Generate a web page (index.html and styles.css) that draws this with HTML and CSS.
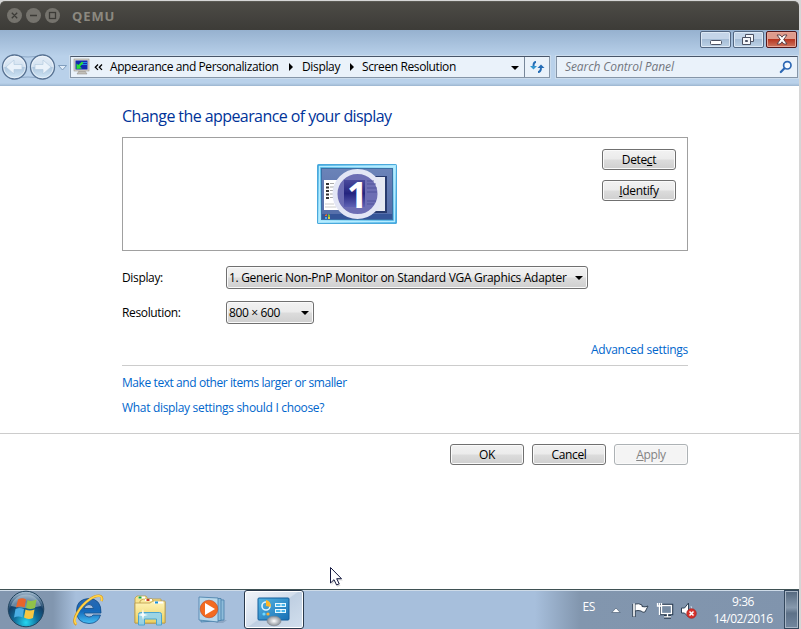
FILE: index.html
```html
<!DOCTYPE html>
<html lang="en">
<head>
<meta charset="utf-8">
<title>QEMU</title>
<link rel="stylesheet" href="styles.css">
</head>
<body>
<div class="vm">
  <div class="host-bar">
    <svg width="60" height="30" viewBox="0 0 60 30"><g fill="#75736d"><circle cx="14.500" cy="15.500" r="7.500"/><circle cx="33.500" cy="15.500" r="7.500"/><circle cx="52.500" cy="15.500" r="7.500"/></g><g fill="none" stroke="#3c3b37" stroke-width="1.300"><path d="M11.800 12.800l5.400 5.400m0-5.400l-5.400 5.400M30 15.500h7"/><rect x="49.500" y="12.500" width="6" height="6"/></g></svg>
    <span class="host-title">QEMU</span>
  </div>
  <header class="glass">
    <div class="caption-row">
      <div class="cap"><svg width="29" height="16"><rect x="9.500" y="8.500" width="11" height="4" rx="1" fill="#fff" stroke="#4c5263"/></svg></div>
      <div class="cap"><svg width="29" height="16"><g fill="#f5f7fa" stroke="#4c5263"><path fill-rule="evenodd" d="M11.500 2.500h8v7h-8zM14.500 5.500h2v1h-2z"/><path fill-rule="evenodd" d="M8.500 5.500h8v7h-8zM11.500 8.500h2v1h-2z"/></g></svg></div>
      <div class="cap close"><svg width="29" height="16"><path d="M10 3h3.200l1.800 2.200L16.800 3H20l-3.300 4.500L20 12h-3.200L15 9.800 13.200 12H10l3.300-4.500z" fill="#fff" stroke="#5d4248"/></svg></div>
    </div>
    <div class="nav-row">
      <svg class="nav-arrows" width="70" height="30" viewBox="0 0 70 30">
        <defs><linearGradient id="orb" x2="0" y2="1"><stop stop-color="#e7eff8"/><stop offset=".48" stop-color="#d2e1f0"/><stop offset=".52" stop-color="#aec7df"/><stop offset="1" stop-color="#d3e8f7"/></linearGradient></defs>
        <path d="M12 3Q28 7 44 3M12 27Q28 23 44 27" stroke="#8da8c6" fill="none"/>
        <g fill="url(#orb)" stroke="#587292" stroke-width="1.300"><circle cx="14.500" cy="15" r="12"/><circle cx="42.500" cy="15" r="12"/></g>
        <g fill="none" stroke="#f4f8fc" stroke-opacity=".65"><circle cx="14.500" cy="15" r="10.800"/><circle cx="42.500" cy="15" r="10.800"/></g>
        <g fill="#eaf2fa" stroke="#b5cbe0" stroke-width=".7"><path d="M6 15l8-7v4.500h8v5h-8V22z"/><path d="M51 15l-8-7v4.500h-8v5h8V22z"/></g>
        <path d="M58.500 13.500h8L62.500 18z" fill="#e0ecf8" stroke="#7896b8" stroke-width=".9"/>
      </svg>
      <div class="address">
        <svg class="addr-icon" width="18" height="18" viewBox="0 0 18 18"><path d="M6 13h6l2 3H4z" fill="#c2c0b9" stroke="#8e8b84" stroke-width=".5"/><rect x="1" y="1" width="15" height="12" fill="#d7d4cc" stroke="#99958c" stroke-width=".6"/><rect x="2.500" y="2.500" width="12" height="9" fill="#1228b0"/><path d="M8 4.500h6M9 6.500h5" stroke="#258ae8"/><path d="M3.500 11V5.500L5.300 7 9 3.500 10.500 5 7 8.500 9 10.500z" fill="#29df37"/></svg>
        <svg class="chev" width="9" height="9" viewBox="0 0 9 9"><path d="M4 1.500L1.300 4.200 4 6.900M8 1.500L5.300 4.200 8 6.900" fill="none" stroke="#000" stroke-width="1.300"/></svg>
        <span class="crumb c1">Appearance and Personalization</span>
        <i class="tri t1"></i>
        <span class="crumb c2">Display</span>
        <i class="tri t2"></i>
        <span class="crumb c3">Screen Resolution</span>
        <i class="down addr-down"></i>
        <div class="refresh"><svg width="16" height="16" viewBox="0 0 16 16"><path d="M7 3Q4.500 3 4.500 7M9 13q3 0 3-5" fill="none" stroke="#246cb5" stroke-width="2"/><path d="M1 7h7L4.500 10.500z" fill="#3395cf"/><path d="M8.500 9h7L12 5.500z" fill="#246cb5"/></svg></div>
      </div>
      <div class="search"><span class="search-text">Search Control Panel</span><svg width="14" height="14" viewBox="0 0 14 14"><circle cx="8.300" cy="5.300" r="3.700" fill="#f7fbff" stroke="#2d68b4" stroke-width="1.700"/><path d="M5.500 8.200L1.800 12" stroke="#2d68b4" stroke-width="2.200" stroke-linecap="round"/></svg></div>
    </div>
  </header>
  <main class="page">
    <div class="settings">
      <h1><span class="heading">Change the appearance of your display</span></h1>
      <section class="preview">
        <svg class="monitor" width="80" height="60" viewBox="0 0 80 60">
          <defs><linearGradient id="frame" x2="1" y2="1"><stop stop-color="#36a3dc"/><stop offset=".5" stop-color="#a5e4fb"/><stop offset="1" stop-color="#3aa6e2"/></linearGradient><linearGradient id="desk" x2="0" y2="1"><stop stop-color="#6b83b8"/><stop offset="1" stop-color="#536ca8"/></linearGradient><linearGradient id="disc" x2="0" y2="1"><stop stop-color="#4a4a9c"/><stop offset=".5" stop-color="#24257f"/><stop offset="1" stop-color="#5e62b4"/></linearGradient></defs>
          <rect width="80" height="60" rx="1.500" fill="#4aa9dc"/><rect x="1" y="1" width="78" height="58" fill="url(#frame)"/><rect x="2.500" y="2.500" width="75" height="55" fill="none" stroke="#b5ecff" stroke-width="1.500"/>
          <rect x="4.500" y="4.500" width="71" height="51" fill="url(#desk)" stroke="#3a70a5"/>
          <path d="M54 12h16v37H54z" fill="#283b6e"/><rect x="53" y="13" width="15" height="34" fill="#e5e9f2"/>
          <rect x="7" y="16" width="18" height="30" fill="#fff"/><path d="M10.500 19v16" stroke="#333" stroke-width="3" stroke-dasharray="2 1.500"/><path d="M15 19v16" stroke="#aaa" stroke-width="4" stroke-dasharray="1 2.500"/><path d="M8 40h9M8 43h11" stroke="#ccc"/>
          <rect x="5" y="50" width="70" height="5" fill="#355598"/><path d="M8 51l2-1v2H8z" fill="#e96a2c"/><path d="M11 50l2 1v2h-2z" fill="#7dbb3a"/><path d="M8 53h2v2H8z" fill="#4ba7e9"/><path d="M11 53h2v2h-2z" fill="#dfc83c"/>
          <circle cx="40.500" cy="30" r="22.500" fill="#6d6eb4" stroke="#e3e6f5" stroke-width="5"/>
          <rect x="27" y="16" width="21" height="27" fill="url(#disc)"/>
          <path d="M50 17h7M50 20h9M50 24h10M50 28h10M50 37h9M50 40h7" stroke="#4b4d98" opacity=".8"/>
          <text x="40" y="43.500" text-anchor="middle" class="monitor-number">1</text>
        </svg>
        <div class="preview-actions"><button><span>Dete<u>c</u>t</span></button><button><span><u>I</u>dentify</span></button></div>
      </section>
      <div class="field"><label>Display:</label><div class="combo wide"><span class="monitor-name">1. Generic Non-PnP Monitor on Standard VGA Graphics Adapter</span><i class="down"></i></div></div>
      <div class="field second"><label>Resolution:</label><div class="combo small"><span>800 × 600</span><i class="down"></i></div></div>
      <div class="advanced"><a>Advanced settings</a></div>
      <div class="links"><a class="text-size">Make text and other items larger or smaller</a><a class="which">What display settings should I choose?</a></div>
    </div>
    <footer class="actions"><button><span>OK</span></button><button><span>Cancel</span></button><button class="disabled"><span><u>A</u>pply</span></button></footer>
    <svg class="cursor" width="18" height="22" viewBox="0 0 18 22"><path d="M2.500 3v16l3.500-3.500L8.500 21l3-1.500L9 14.500h5z" fill="#888" opacity=".3"/><path d="M1.500 1.500v15.500l3.500-3.300 2.600 5.300 2.600-1.200-2.500-5.100h4.800z" fill="#fff" stroke="#161a40"/></svg>
  </main>
  <div class="taskbar">
    <svg class="start" width="38" height="38" viewBox="0 0 38 38"><defs><radialGradient id="start" cx=".5" cy=".88" r=".85"><stop stop-color="#25d7f1"/><stop offset=".38" stop-color="#116f9c"/><stop offset=".7" stop-color="#143e66"/><stop offset="1" stop-color="#a0b8cc"/></radialGradient></defs><circle cx="19" cy="19" r="17.800" fill="url(#start)" stroke="#21445f"/><path d="M4 16a15.500 15.500 0 0 1 30 0Q19 20 4 16z" fill="#dce9f1" opacity=".42"/><path d="M11 9.500q4-2.500 8 0l-1.500 8q-4-2-8.500 0z" fill="#e8652b"/><path d="M20.500 10q4 2 9-.5l-1.500 8.500q-5 2-9 0z" fill="#91c249"/><path d="M8.500 19q4-2 8.500 0l-1.500 8.500q-4-2-8.500 0z" fill="#4aaee4"/><path d="M18.500 19.500q4 2 9 0L26 28q-5 2-9-.5z" fill="#f7c742"/></svg>
    <svg class="ie" width="34" height="34" viewBox="0 0 34 34"><defs><linearGradient id="ieb" x2="0" y2="1"><stop stop-color="#2b68b0"/><stop offset=".5" stop-color="#1468ba"/><stop offset="1" stop-color="#45c0f5"/></linearGradient></defs><path fill-rule="evenodd" d="M30 20H13q.8 4 5 4 3 0 4-2h7.500Q27 30.500 18 30.500 5.500 30 5.500 18 5.500 6 18 5.500 30.500 6 30 20zM13 15.500h9.500Q22 11.500 18 11.500t-5 4z" fill="url(#ieb)" stroke="#124b88" stroke-width=".8"/><path d="M5.500 31.500C-1 28 9 13 18.500 6.500 26 1 33 1.500 30.500 8" fill="none" stroke="#d29724" stroke-width="2.600"/><path d="M5.500 31C0 28 9 13 18.500 6.500 26 1 32.500 2 30.500 8" fill="none" stroke="#ffd44b" stroke-width="1.700"/></svg>
    <svg class="folder" width="34" height="32" viewBox="0 0 34 32"><defs><linearGradient id="fold" x2="0" y2="1"><stop stop-color="#fff5bb"/><stop offset="1" stop-color="#ecd05f"/></linearGradient></defs><g stroke="#b99b48" stroke-width=".8"><path d="M2 28V3l2-2h9l2 3h13v24z" fill="#f7e48f"/><path d="M7 28V6l3-2h9l2 3h11v21z" fill="#fae99e"/><path d="M2 28V8h15l3-2h12v22z" fill="url(#fold)"/></g><path d="M5 2.500h7M12 5h7M21 7.500h9" stroke="#fff" stroke-width="2"/><path d="M5.500 2.500h3" stroke="#18a83e" stroke-width="2"/><path d="M13.500 5h3" stroke="#cb3a22" stroke-width="2"/><path d="M22 7.500h3" stroke="#1991db" stroke-width="2"/><path d="M5.500 30V19.500q0-2 2-2h19q2 0 2 2V30h-5v-6h-12v6z" fill="#91d3ef" fill-opacity=".9" stroke="#4ba5cf"/><path d="M5 20l3.500-1L10 14l1 5 4 1-4 1-1 4-1-4z" fill="#fff" opacity=".9"/></svg>
    <svg class="media" width="30" height="28" viewBox="0 0 30 28"><path d="M23 24h6l-4 3h-8z" fill="#66829f" opacity=".4"/><g fill="#8ebcda" stroke="#467fa9" stroke-width=".8"><path d="M5 3l21 1v20l-21 1z"/><path d="M3 2l20 .5v22L3 26z"/><path d="M1 1l19 1v24L1 24z" fill="#b8d8eb"/></g><circle cx="11" cy="13" r="8.800" fill="#f36b20" stroke="#bd471e" stroke-width=".6"/><path d="M7 7l10 6-10 6z" fill="#fff"/></svg>
    <div class="active-task"><svg width="34" height="30" viewBox="0 0 34 30"><defs><linearGradient id="panel" x2="1" y2="1"><stop stop-color="#55b4e2"/><stop offset="1" stop-color="#1770b5"/></linearGradient><radialGradient id="ball"><stop stop-color="#fff"/><stop offset="1" stop-color="#8c929a"/></radialGradient></defs><rect x="1" y="1" width="31" height="22" rx="1" fill="url(#panel)" stroke="#145e9c"/><circle cx="9" cy="9" r="4" fill="none" stroke="#dff4ff" stroke-width="1.600"/><path d="M9 9V3a5.500 5.500 0 0 1 4.500 7z" fill="#ffb627"/><g fill="#49b6ec" stroke="#e5f8ff"><rect x="18.500" y="6.500" width="10" height="3"/><rect x="18.500" y="12.500" width="10" height="3"/></g><path d="M24 6v4M24 12v4" stroke="#fff"/><circle cx="7" cy="17" r="1.600" fill="#6ed8ff"/><circle cx="11" cy="17" r="1.600" fill="#ffae32"/><ellipse cx="17" cy="24" rx="7" ry="4.800" fill="url(#ball)" stroke="#858b94" stroke-width=".6"/></svg></div>
    <div class="tray">
      <span class="language">ES</span>
      <svg class="up" width="10" height="8"><path d="M.8 6.500h8.400L5 2z" fill="#fff" stroke="#4f6177" stroke-width=".7"/></svg>
      <svg class="flag" width="18" height="18"><path d="M3 2v13" stroke="#344456" stroke-width="3.500"/><path d="M4 2q4-1 7 1v1.500q3 1 6-.5l-3 6q-2 1-4-1-3-1-6 0z" fill="#fff" stroke="#344456"/><path d="M3 1.500v13" stroke="#fff" stroke-width="1.600"/></svg>
      <svg class="network" width="18" height="18"><path d="M5.500 3.500h10v8h-10zM8 15h7M11.500 12v3" fill="none" stroke="#293c52" stroke-width="3.500"/><rect x="5.500" y="3.500" width="10" height="8" fill="#768ba3" stroke="#fff" stroke-width="1.300"/><path d="M8 14.800h7M11.500 12v3M1.500 1v3h4V1M3.500 1v12" fill="none" stroke="#fff" stroke-width="1.300"/></svg>
      <svg class="sound" width="17" height="18"><path d="M1.500 6h3l4-5v14l-4-4h-3z" fill="#fff" stroke="#304358"/><path d="M11 4q2 3 0 7" stroke="#cbd6e2" fill="none"/><circle cx="11.500" cy="11.500" r="4.800" fill="#d8322c" stroke="#9e1715" stroke-width=".6"/><path d="M9.500 9.500l4 4m0-4l-4 4" stroke="#fff" stroke-width="1.600"/></svg>
      <div class="clock"><span>9:36</span><span>14/02/2016</span></div>
      <div class="show-desktop"></div>
    </div>
  </div>
</div>
</body>
</html>
```

FILE: styles.css
```css
* { box-sizing: border-box; }
body { margin: 0; width: 801px; height: 629px; overflow: hidden; background: #d6d6d6; font: 12px/16px "Open Sans", sans-serif; color: #000; letter-spacing: -.35px; white-space: nowrap; }
svg { display: block; flex: none; }
.vm { width: 799px; height: 629px; display: flex; flex-direction: column; padding-top: 1px; }
.host-bar { height: 29px; flex: none; background: linear-gradient(#4d4b46, #3d3c38 95%); border-top: 1px solid #5c5b55; border-radius: 5px 5px 0 0; display: flex; }
.host-bar svg { margin-top: -2px; }
.host-title { margin: 6px 0 0 12px; color: #8c8980; font: bold 13px/17px "Open Sans", sans-serif; letter-spacing: .9px; }
.glass { height: 56px; flex: none; background: linear-gradient(#96b1cf, #b9d1ea 48%, #b9d1ea 53px, #a7c0da); border-bottom: 1px solid #a1bad4; }
.caption-row { height: 22px; padding-top: 1px; display: flex; justify-content: flex-end; gap: 2px; margin-right: 2px; }
.cap { width: 31px; height: 17px; border: 1px solid #536781; border-radius: 2px; box-shadow: inset 0 0 0 1px #dce8f4; background: linear-gradient(#c4d5e8 45%, #a5bdd6 50%, #bdd2e6); }
.close { border-color: #54181b; background: linear-gradient(#df9b8c 45%, #b83620 50%, #cd765f); box-shadow: inset 0 0 0 1px #e7a697; }
.nav-row { display: flex; height: 30px; }
.address { width: 480px; height: 22px; margin-top: 4px; border: 1px solid #8696a8; border-top-color: #485568; background: #eaf2fa; display: flex; align-items: center; box-shadow: 0 0 0 1px #cbdced; }
.addr-icon { margin-left: 2px; }
.chev { margin: 0 7px 0 3px; }
.crumb { line-height: 18px; }
.c1 { width: 170px; letter-spacing: -.41px; }
.c2 { width: 39px; }
.c3 { width: 95px; letter-spacing: -.39px; }
.tri { width: 0; height: 0; border: 4px solid transparent; border-left: 4px solid #000; border-right: 0; }
.t1 { margin: 0 9px; }
.t2 { margin: 0 8px 0 9px; }
.down { width: 0; height: 0; border: 4px solid transparent; border-top-color: #000; border-bottom: 0; }
.addr-down { margin: 2px 5px 0 auto; }
.refresh { height: 20px; width: 25px; border-left: 1px solid #77879a; padding: 2px 4px; }
.search { width: 242px; height: 22px; margin: 4px 0 0 6px; border: 1px solid #8696a8; border-top-color: #485568; background: #eaf2fa; display: flex; justify-content: space-between; align-items: center; padding: 0 4px 0 8px; box-shadow: 0 0 0 1px #cbdced; }
.search-text { font-style: italic; color: #737780; letter-spacing: -.1px; }
.page { height: 503px; flex: none; background: #fff; position: relative; }
.settings { width: 566px; margin-left: 122px; height: 347px; }
h1 { margin: 0; padding-top: 18px; height: 51px; font: 16px/24px "Open Sans", sans-serif; color: #003399; letter-spacing: -.58px; }
.preview { height: 114px; border: 1px solid #a0a0a0; display: flex; justify-content: space-between; padding: 11px; }
.monitor { margin: 15px 0 0 183px; }
.monitor-number { font: bold 36px "Open Sans", sans-serif; fill: #fff; }
.preview-actions { display: flex; flex-direction: column; gap: 10px; }
button { width: 74px; height: 21px; border: 1px solid #707070; border-radius: 3px; padding: 0; font: 12px/18px "Open Sans", sans-serif; letter-spacing: -.35px; color: #000; background: linear-gradient(#f2f2f2, #ebebeb 48%, #dcdcdc 52%, #cfcfcf); box-shadow: inset 0 0 0 1px #fafafa; }
u { text-underline-offset: 1px; }
.field { margin-top: 15px; height: 23px; display: flex; }
.second { margin-top: 12px; }
.field label { width: 104px; line-height: 23px; }
.combo { height: 23px; border: 1px solid #707070; border-radius: 3px; background: linear-gradient(#f2f2f2, #ebebeb 48%, #dcdcdc 52%, #cfcfcf); box-shadow: inset 0 0 0 1px #fafafa; padding: 0 4px 0 2px; display: flex; align-items: center; justify-content: space-between; }
.wide { width: 362px; }
.small { width: 88px; }
.monitor-name { letter-spacing: -.31px; }
a { color: #0066cc; }
.advanced { margin-top: 18px; height: 24px; border-bottom: 1px solid #ccc; text-align: right; letter-spacing: -.27px; }
.links { padding-top: 9px; display: flex; flex-direction: column; gap: 9px; align-items: flex-start; }
.text-size { letter-spacing: -.42px; }
.which { letter-spacing: -.32px; }
.actions { border-top: 1px solid #ccc; display: flex; gap: 8px; padding: 10px 0 0 450px; }
button.disabled { color: #838383; border-color: #adb2b5; background: #f4f4f4; }
.cursor { position: absolute; left: 329px; top: 480px; }
.taskbar { height: 40px; flex: none; background: linear-gradient(90deg, #8296af 0, #8196af 53px, #a7bfdc 76px, #a7bfdc 535px, #8296ae 580px, #8094ad); border-top: 1px solid #3f5154; box-shadow: inset 0 1px #cedbe8; display: flex; }
.start { margin-left: 7px; }
.ie { margin: 3px 0 0 26px; }
.folder { margin: 5px 0 0 28px; }
.media { margin: 6px 0 0 31px; }
.active-task { width: 60px; height: 39px; margin-left: 16px; border: 1px solid #29394c; border-radius: 3px; padding: 6px 0 0 12px; background: linear-gradient(145deg, #f0f4f9, #d3deec 48%, #bfcfe2 50%, #d2dfed); box-shadow: inset 0 0 0 1px #fff; }
.tray { margin-left: auto; height: 39px; display: flex; color: #fff; }
.language { margin: 9px 0 0; }
.up { margin: 16px 0 0 16px; }
.flag { margin: 12px 0 0 10px; }
.network { margin: 12px 0 0 7px; }
.sound { margin: 12px 0 0 6px; }
.clock { width: 60px; margin: 3px 11px 0 16px; display: flex; flex-direction: column; text-align: center; line-height: 17px; letter-spacing: -.45px; }
.show-desktop { width: 15px; background: linear-gradient(#53677e, #8799ad 45%, #5d7188 60%, #73879f); border: 1px solid #33475d; box-shadow: inset 0 0 0 1px #a7b5c5; }
```
